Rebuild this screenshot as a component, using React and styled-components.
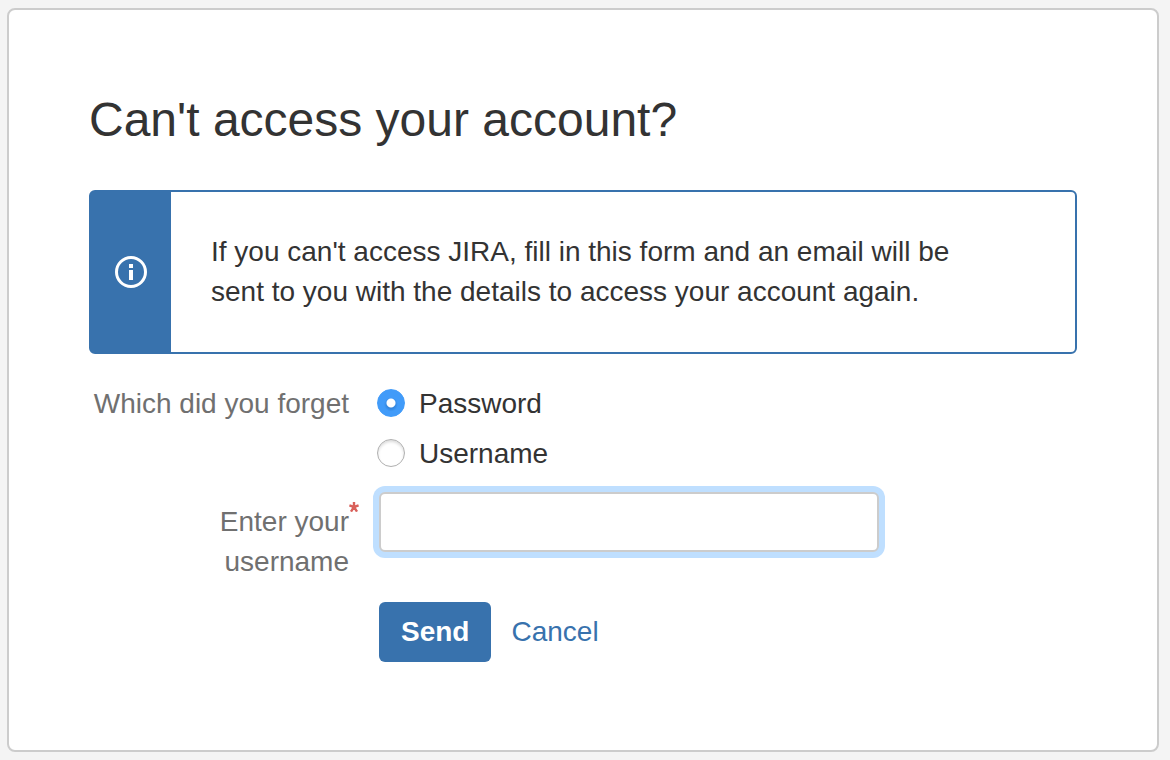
//= App.jsx

//= Dependencies =//
import { useState } from 'react';
import styled, { createGlobalStyle, ThemeProvider } from 'styled-components';

//= theme =//
const theme = {
    page: '#f4f4f4',
    panel: '#ffffff',
    border: '#cccccc',
    primary: '#3872ad',
    text: '#333333',
    label: '#707070',
    focus: '#bfdfff',
    radio: '#419bf9',
    required: '#d9605a',
};

//= styling =//
const GlobalStyle = createGlobalStyle`
    *, *::before, *::after {
        box-sizing: border-box;
    }
    body {
        margin: 0;
        background-color: ${theme.page};
        color: ${theme.text};
        font-family: Arial, "Liberation Sans", sans-serif;
        font-size: 28px;
        line-height: 40px;
    }
`;
const Panel = styled.main`
    margin: 8px 11px 8px 7px;
    padding: 80px 80px 88px;
    background-color: ${(props) => props.theme.panel};
    border: 2px solid ${(props) => props.theme.border};
    border-radius: 8px;
`;
const Title = styled.h1`
    margin: 0 0 40px;
    font-size: 48px;
    font-weight: 400;
    line-height: 60px;
`;
const Message = styled.div`
    display: flex;
    margin-bottom: 30px;
    border: 2px solid ${(props) => props.theme.primary};
    border-radius: 6px;
    p {
        margin: 0;
        padding: 40px 80px 40px 40px;
    }
`;
const MessageIcon = styled.div`
    display: flex;
    flex: 0 0 80px;
    justify-content: center;
    align-items: center;
    background-color: ${(props) => props.theme.primary};
`;
const Form = styled.form`
    display: flex;
    flex-direction: column;
`;
const Field = styled.div`
    display: grid;
    grid-template-columns: 260px minmax(0, 500px);
    column-gap: 30px;
    align-items: start;
    margin-bottom: ${(props) => props.$gap || 0}px;
`;
const FieldName = styled.div`
    padding-top: ${(props) => props.$top || 0}px;
    color: ${(props) => props.theme.label};
    text-align: right;
`;
const Required = styled.span`
    position: relative;
    svg {
        position: absolute;
        left: 100%;
        top: -4px;
    }
`;
const Options = styled.div`
    display: flex;
    flex-direction: column;
    gap: 10px;
    margin-left: -2px;
`;
const Option = styled.label`
    display: flex;
    align-items: center;
    gap: 14px;
`;
const Radio = styled.input`
    appearance: none;
    width: 28px;
    height: 28px;
    margin: 0 0 2px;
    border: 1px solid #b0b0b0;
    border-radius: 50%;
    background-color: #fff;
    box-shadow: inset 0 2px 3px rgba(0, 0, 0, 0.14);
    &:checked {
        border-color: ${(props) => props.theme.radio};
        background:
            radial-gradient(circle, #fff 4px, transparent 5px),
            radial-gradient(circle at 50% 56%, #2f7fd6 3px, ${(props) => props.theme.radio} 7px);
        box-shadow: none;
    }
`;
const TextInput = styled.input`
    width: 100%;
    height: 60px;
    padding: 8px;
    border: 2px solid ${(props) => props.theme.border};
    border-radius: 6px;
    color: inherit;
    font: inherit;
    outline: none;
    &:focus {
        box-shadow: 0 0 0 6px ${(props) => props.theme.focus};
    }
`;
const Buttons = styled.div`
    display: flex;
    align-items: center;
    gap: 20px;
    margin-left: 290px;
`;
const Button = styled.button`
    height: 60px;
    padding: 0 22px;
    border: 0;
    border-radius: 6px;
    background-color: ${(props) => props.theme.primary};
    color: #fff;
    font: inherit;
    font-weight: 700;
    cursor: pointer;
`;
const Link = styled.a`
    color: ${(props) => props.theme.primary};
    text-decoration: none;
`;

//= icons =//
const InfoIcon = () => (
    <svg width="32" height="32" viewBox="0 0 32 32" aria-hidden="true">
        <circle cx="16" cy="16" r="14.5" fill="none" stroke="#fff" strokeWidth="3" />
        <path d="M14 8h4v4h-4zM14 14h4v10h-4z" fill="#fff" />
    </svg>
);
const RequiredIcon = () => (
    <svg width="10" height="10" viewBox="0 0 10 10" aria-hidden="true">
        <path
            d="M5 0v5M5 5L0.4 3.4M5 5l4.6-1.6M5 5L2 9.6M5 5l3 4.6"
            fill="none"
            stroke={theme.required}
            strokeWidth="2.4"
        />
    </svg>
);

//= component definition =//
export default function App() {
    const [forgotten, setForgotten] = useState('password');
    const [username, setUsername] = useState('');

    const handleSubmit = (e) => {
        e.preventDefault();
    };

    const option = (value, text) => (
        <Option>
            <Radio
                type="radio"
                name="forgotten"
                value={value}
                checked={forgotten === value}
                onChange={() => setForgotten(value)}
            />
            {text}
        </Option>
    );

    return (
        <ThemeProvider theme={theme}>
            <GlobalStyle />
            <Panel>
                <Title>Can&apos;t access your account?</Title>
                <Message>
                    <MessageIcon><InfoIcon /></MessageIcon>
                    <p>
                        If you can&apos;t access JIRA, fill in this form and an email will be
                        sent to you with the details to access your account again.
                    </p>
                </Message>
                <Form onSubmit={handleSubmit}>
                    <Field $gap={18}>
                        <FieldName id="forgotten-label">Which did you forget</FieldName>
                        <Options role="radiogroup" aria-labelledby="forgotten-label">
                            {option('password', 'Password')}
                            {option('username', 'Username')}
                        </Options>
                    </Field>
                    <Field $gap={20}>
                        <FieldName as="label" htmlFor="username" $top={10}>
                            Enter <Required>your<RequiredIcon /></Required>
                            <br />
                            username
                        </FieldName>
                        <TextInput
                            id="username"
                            type="text"
                            value={username}
                            onChange={(e) => setUsername(e.target.value)}
                            autoFocus
                        />
                    </Field>
                    <Buttons>
                        <Button type="submit">Send</Button>
                        <Link href="#login">Cancel</Link>
                    </Buttons>
                </Form>
            </Panel>
        </ThemeProvider>
    );
}
